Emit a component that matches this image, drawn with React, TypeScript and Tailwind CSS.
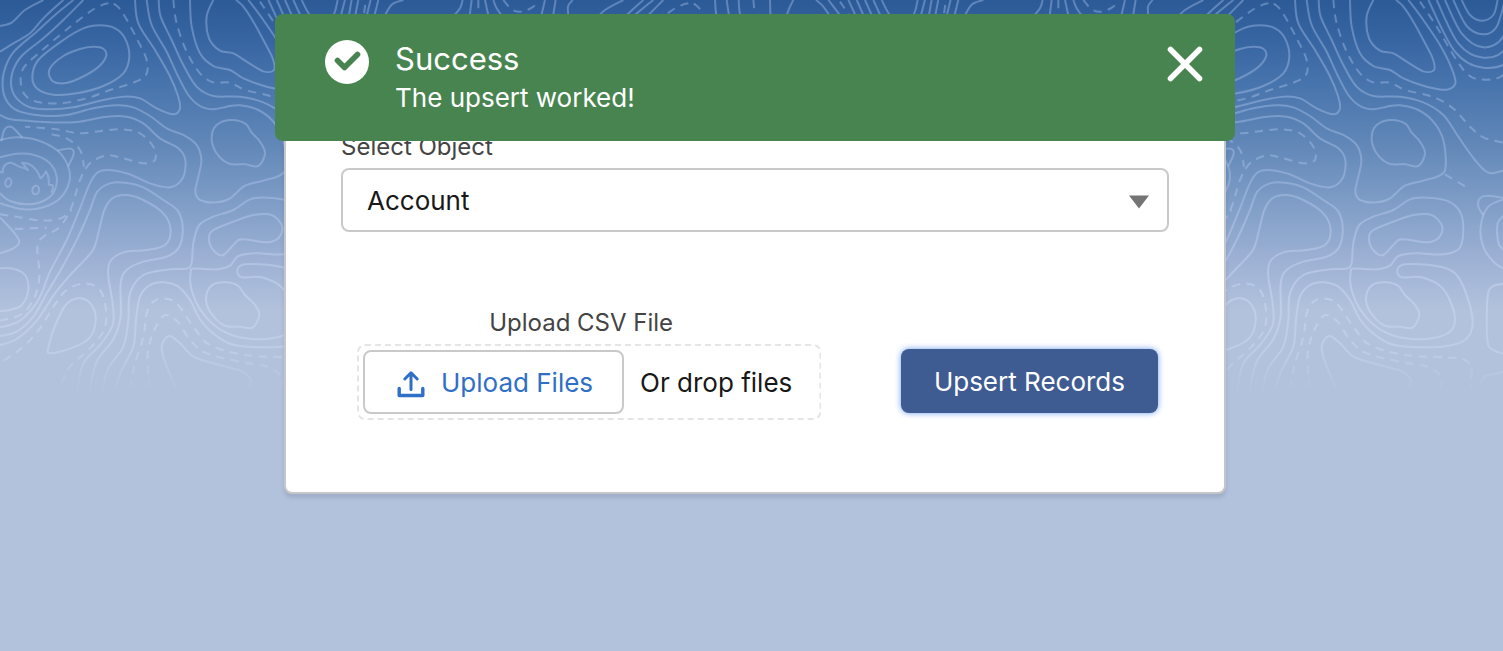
import React, { useState } from "react";

type Point = [number, number];
type Contour = { points: Point[]; closed?: boolean; dashed?: boolean };

// Rounds a list of survey points into one continuous cubic path.
function smooth(points: Point[], closed = false): string {
  const n = points.length;
  const at = (i: number): Point =>
    closed ? points[(i + n) % n] : points[Math.max(0, Math.min(n - 1, i))];
  let d = `M${points[0][0]} ${points[0][1]}`;
  const last = closed ? n : n - 1;
  for (let i = 0; i < last; i++) {
    const [a, b, c, e] = [at(i - 1), at(i), at(i + 1), at(i + 2)];
    d += `C${b[0] + (c[0] - a[0]) / 6} ${b[1] + (c[1] - a[1]) / 6} ${c[0] - (e[0] - b[0]) / 6} ${
      c[1] - (e[1] - b[1]) / 6
    } ${c[0]} ${c[1]}`;
  }
  return closed ? d + "Z" : d;
}

const contours: Contour[] = [
  { points: [[0, 78], [35, 68], [75, 30], [130, 0]] },
  { points: [[0, 155], [40, 130], [90, 100], [130, 55], [190, 0]] },
  {
    points: [
      [220, 0], [165, 45], [110, 95], [40, 157], [12, 215], [9, 270], [25, 310], [60, 335], [130, 347], [200, 345],
      [280, 325], [350, 316], [400, 322], [450, 348], [500, 385], [550, 405], [590, 435], [604, 480], [595, 530],
      [586, 575], [600, 600], [650, 607], [690, 595], [735, 557], [790, 542], [840, 526], [857, 500], [850, 420],
      [820, 365], [775, 330], [720, 316], [680, 320], [640, 328], [600, 318], [565, 285], [530, 220], [500, 155],
      [455, 75], [440, 0],
    ],
  },
  {
    points: [
      [250, 0], [190, 60], [130, 115], [65, 168], [38, 215], [34, 260], [50, 295], [90, 322], [150, 328], [220, 322],
      [300, 302], [370, 290], [420, 295], [470, 325], [520, 343], [540, 325], [533, 285], [508, 225], [465, 150],
      [415, 70], [405, 0],
    ],
  },
  {
    dashed: true,
    closed: true,
    points: [
      [325, 10], [285, 25], [230, 65], [180, 105], [110, 165], [70, 205], [62, 245], [75, 285], [110, 305], [180, 310],
      [260, 295], [330, 270], [400, 248], [438, 225], [440, 180], [410, 115], [375, 50], [350, 17],
    ],
  },
  {
    closed: true,
    points: [
      [300, 76], [250, 85], [190, 120], [115, 180], [97, 230], [112, 266], [160, 284], [230, 280], [310, 258],
      [370, 220], [388, 170], [375, 115], [345, 85],
    ],
  },
  {
    closed: true,
    points: [[280, 140], [240, 147], [190, 168], [150, 205], [153, 238], [180, 250], [220, 243], [290, 205], [318, 170], [310, 146]],
  },
  {
    points: [
      [476, 0], [482, 50], [515, 120], [550, 195], [590, 260], [640, 288], [720, 290], [790, 307], [850, 345],
      [895, 410], [945, 480], [985, 518], [1029, 512], [1060, 500],
    ],
  },
  {
    dashed: true,
    points: [
      [520, 0], [530, 70], [560, 155], [600, 220], [640, 247], [690, 248], [735, 270], [800, 285], [850, 305],
      [890, 335], [930, 380], [970, 412], [1029, 428],
    ],
  },
  {
    points: [
      [570, 0], [575, 80], [600, 160], [640, 198], [690, 210], [730, 235], [800, 260], [860, 269], [886, 250],
      [875, 205], [840, 135], [790, 60], [745, 0],
    ],
  },
  {
    points: [
      [640, 0], [620, 50], [627, 115], [660, 152], [700, 160], [740, 185], [790, 214], [822, 210], [818, 175],
      [790, 120], [760, 65], [730, 20], [708, 0],
    ],
  },
  { dashed: true, points: [[780, 5], [830, 80], [880, 165], [920, 220], [960, 238], [1029, 225], [1075, 130], [1098, 0]] },
  { points: [[905, 0], [930, 45], [965, 62], [1000, 45], [1013, 0]] },
  { points: [[880, 0], [920, 78], [970, 103], [1010, 80], [1035, 0]] },
  { points: [[855, 0], [905, 100], [970, 142], [1029, 110], [1055, 0]] },
  { points: [[830, 0], [895, 130], [970, 173], [1040, 140], [1075, 0]] },
  { points: [[805, 0], [885, 155], [970, 203], [1060, 170], [1112, 0]] },
  { points: [[1135, 0], [1120, 60]] },
  { points: [[1210, 0], [1175, 14], [1150, 55]] },
  { points: [[1388, 0], [1380, 25], [1355, 55]] },
  { points: [[1415, 0], [1408, 55]] },
  { dashed: true, points: [[1435, 0], [1435, 50]] },
  { points: [[1455, 0], [1467, 55]] },
  { points: [[1480, 0], [1490, 25], [1515, 60]] },
  { dashed: true, points: [[1510, 0], [1535, 28], [1565, 35], [1600, 20], [1614, 0]] },
  { points: [[1635, 0], [1622, 55]] },
  { points: [[1667, 0], [1658, 55]] },
  { points: [[1718, 0], [1704, 20], [1706, 55]] },
  {
    points: [
      [0, 345], [30, 358], [90, 363], [150, 367], [230, 366], [320, 350], [380, 350], [430, 370], [480, 415],
      [535, 445], [556, 480], [548, 535], [510, 562], [450, 550], [380, 520], [310, 511], [275, 540], [238, 630],
      [200, 720], [150, 815], [115, 900], [60, 962], [0, 982],
    ],
  },
  {
    points: [
      [0, 1008], [50, 995], [100, 950], [140, 880], [185, 805], [235, 710], [270, 630], [292, 575], [330, 550],
      [375, 548], [430, 562], [490, 600], [533, 632], [548, 680], [538, 740], [500, 770], [430, 785], [380, 810],
      [362, 850], [362, 950], [340, 1018], [290, 1085], [267, 1180],
    ],
  },
  {
    points: [
      [0, 1035], [50, 1017], [110, 962], [165, 880], [220, 815], [278, 752], [295, 700], [313, 630], [340, 593],
      [380, 585], [430, 600], [490, 640], [512, 690], [495, 735], [440, 750], [370, 757], [330, 785], [325, 830],
      [338, 910], [338, 975], [300, 1035], [250, 1090], [230, 1180],
    ],
  },
  {
    points: [
      [305, 1180], [325, 1105], [370, 1040], [385, 960], [390, 880], [430, 825], [510, 808], [560, 806], [575, 788],
      [580, 730], [597, 676], [640, 650], [700, 630], [750, 598], [800, 593], [860, 602], [900, 635], [910, 690],
      [898, 745], [850, 763], [770, 760], [715, 768], [690, 797], [650, 808], [585, 806], [572, 815], [575, 870],
      [605, 935], [660, 988], [735, 1015], [825, 1013], [875, 990], [883, 940], [848, 865], [785, 832], [725, 832],
      [712, 810], [735, 793], [825, 797], [885, 820], [920, 885], [938, 970], [915, 1020], [845, 1040], [720, 1038],
      [660, 1015], [605, 965], [570, 900], [535, 860], [490, 847], [450, 855], [420, 890], [408, 960], [400, 1040],
      [365, 1110], [342, 1180],
    ],
  },
  {
    closed: true,
    points: [[680, 847], [640, 853], [619, 885], [627, 930], [670, 975], [720, 980], [758, 983], [778, 945], [765, 915], [735, 885], [715, 858]],
  },
  {
    closed: true,
    points: [[627, 715], [640, 690], [700, 665], [760, 645], [815, 645], [847, 680], [835, 715], [800, 727], [725, 718], [700, 735], [668, 766], [638, 748]],
  },
  {
    closed: true,
    points: [[690, 360], [650, 375], [635, 410], [647, 455], [685, 490], [735, 493], [775, 498], [795, 460], [780, 425], [755, 398], [735, 370]],
  },
  { closed: true, points: [[150, 1060], [147, 1035], [168, 970], [200, 912], [240, 895], [275, 915], [287, 960], [270, 1012], [220, 1042]] },
  {
    dashed: true,
    points: [
      [185, 1150], [210, 1100], [270, 1045], [312, 990], [318, 930], [300, 870], [255, 850], [200, 870], [160, 920],
      [120, 985], [70, 1040], [0, 1090],
    ],
  },
  {
    dashed: true,
    points: [
      [390, 1165], [405, 1090], [430, 1010], [440, 940], [460, 905], [490, 895], [530, 910], [580, 980], [630, 1035],
      [735, 1065], [860, 1072], [915, 1080], [935, 1110], [930, 1180],
    ],
  },
  {
    dashed: true,
    points: [
      [450, 1165], [442, 1080], [455, 1010], [490, 948], [530, 962], [570, 1020], [620, 1060], [720, 1085],
      [800, 1100], [845, 1130], [840, 1160], [815, 1180],
    ],
  },
  { points: [[535, 1180], [500, 1100], [485, 1040], [507, 1008], [540, 1030], [580, 1070], [640, 1090], [720, 1112], [752, 1140], [735, 1172], [690, 1182]] },
  {
    dashed: true,
    points: [
      [0, 962], [60, 945], [100, 900], [118, 830], [112, 740], [130, 710], [180, 680], [215, 620], [240, 540],
      [270, 490], [320, 466], [370, 475], [430, 490], [465, 480], [460, 440], [420, 400], [370, 388], [310, 392],
      [240, 400], [170, 388], [75, 380],
    ],
  },
  { dashed: true, points: [[155, 403], [200, 415], [240, 450], [252, 500]] },
  { points: [[0, 805], [40, 806], [75, 825], [85, 870], [65, 915], [30, 930], [0, 933]] },
  { points: [[0, 652], [40, 695], [58, 725], [40, 745], [0, 760]] },
  { dashed: true, points: [[0, 643], [50, 650], [120, 661], [180, 656], [215, 630]] },
  { dashed: true, points: [[45, 687], [140, 683]] },
  { dashed: true, points: [[855, 523], [930, 568]] },
  // Mascot
  { points: [[0, 420], [50, 412], [110, 420], [170, 450], [203, 495], [208, 545], [180, 595], [130, 622], [70, 628], [0, 610]] },
  { points: [[0, 472], [50, 461], [100, 464], [148, 488], [170, 530], [162, 575], [130, 603], [80, 613], [30, 603], [0, 580]] },
  { points: [[4, 424], [14, 388], [35, 381], [67, 413]] },
  { points: [[172, 452], [212, 446], [221, 462], [204, 500]] },
  // Right-hand fragment
  { points: [[970, 645], [955, 620], [960, 595], [985, 587], [1040, 595]] },
  { points: [[1040, 595], [985, 620], [962, 680], [970, 740], [1000, 785], [1040, 812]] },
  { points: [[1040, 640], [1013, 670], [1016, 730], [1040, 755]] },
  { points: [[1040, 850], [1000, 858], [983, 890], [982, 1020], [1000, 1050], [1040, 1063]] },
  { points: [[960, 1160], [975, 1130], [1040, 1114]] },
];

function Topography() {
  return (
    <svg className="absolute inset-x-0 top-0 h-[400px] w-full" aria-hidden="true">
      <defs>
        <linearGradient id="ink" gradientUnits="userSpaceOnUse" x1="0" y1="0" x2="0" y2="1200">
          <stop offset="0" stopColor="#a9c4ec" stopOpacity="0.4" />
          <stop offset="0.45" stopColor="#b4c8ee" stopOpacity="0.4" />
          <stop offset="0.75" stopColor="#d0daf3" stopOpacity="0.5" />
          <stop offset="0.88" stopColor="#d0daf3" stopOpacity="0.42" />
          <stop offset="0.98" stopColor="#d0daf3" stopOpacity="0" />
        </linearGradient>
        <pattern id="topography" patternUnits="userSpaceOnUse" width="580" height="400">
          <g transform="scale(0.33333)" fill="none" stroke="url(#ink)" strokeWidth="6" strokeLinejoin="round">
            {contours.map((c, i) => (
              <path key={i} d={smooth(c.points, c.closed)} strokeDasharray={c.dashed ? "25 19" : undefined} />
            ))}
            <path d="M0 515 L8 518 C8 500 16 488 34 488 C46 493 56 503 70 503 L84 510 L66 488 C88 488 108 500 122 535 C130 530 134 522 138 514 C146 526 148 540 146 554 L158 556 C160 566 158 572 154 578" />
            <ellipse cx="25" cy="548" rx="9" ry="13" transform="rotate(12 25 548)" />
            <ellipse cx="107" cy="570" rx="10" ry="13" transform="rotate(12 107 570)" />
          </g>
        </pattern>
      </defs>
      <rect width="100%" height="100%" fill="url(#topography)" />
    </svg>
  );
}

function Toast({ onClose }: { onClose: () => void }) {
  return (
    <div
      role="status"
      className="absolute top-[14px] z-10 flex h-[127px] w-full max-w-[960px] items-start rounded-lg bg-[#488450] pt-[26px] pr-8 pl-[50px] text-white"
    >
      <svg className="size-11 shrink-0" viewBox="0 0 44 44" aria-hidden="true">
        <circle cx="22" cy="22" r="22" fill="#fff" />
        <path d="M12.5 20.5 L19.5 27.5 L32.5 14.5" fill="none" stroke="#488450" strokeWidth="5.6" strokeLinejoin="round" strokeLinecap="round" />
      </svg>
      <div className="ml-[26px] grow">
        <h2 className="text-[31px] leading-[38px]">Success</h2>
        <p className="text-[26px] leading-10">The upsert worked!</p>
      </div>
      <button type="button" aria-label="Close" onClick={onClose} className="mt-[6px] cursor-pointer">
        <svg className="size-9" viewBox="0 0 36 36" aria-hidden="true">
          <path d="M3.5 3.5 L32.5 32.5 M32.5 3.5 L3.5 32.5" stroke="#fff" strokeWidth="5.6" strokeLinecap="round" />
        </svg>
      </button>
    </div>
  );
}

export default function App() {
  const [open, setOpen] = useState(true);
  return (
    <main className="relative min-h-screen bg-[#b2c2dd] font-['Inter','Liberation_Sans',sans-serif] text-[26px] text-[#181818]">
      <div className="absolute inset-x-0 top-0 h-[320px] bg-[linear-gradient(to_bottom,#2c5a97_0px,#3765a2_40px,#4a76ae_90px,#5f86b7_140px,#7d9cc6_200px,#9db1d4_260px,#b2c2dd_310px)]" />
      <Topography />
      <div className="relative flex justify-center pt-10 pl-[7px]">
        {open && <Toast onClose={() => setOpen(false)} />}
        <form
          onSubmit={(e) => e.preventDefault()}
          className="w-full max-w-[942px] rounded-lg border-2 border-[#c4c6ca] bg-white px-[55px] pt-[87px] pb-[72px] shadow-[0_4px_4px_rgba(0,0,0,0.1)]"
        >
          <label htmlFor="object" className="block text-2xl leading-9 text-[#444]">
            Select Object
          </label>
          <div className="relative mt-[3px]">
            <select
              id="object"
              className="h-16 w-full appearance-none rounded-lg border-2 border-[#c9c9c9] bg-white px-6"
            >
              <option>Account</option>
            </select>
            <svg className="pointer-events-none absolute top-[27px] right-5 h-[14px] w-[20px]" viewBox="0 0 20 14" aria-hidden="true">
              <path d="M0 0.5 H20 L10 13.5 Z" fill="#747474" />
            </svg>
          </div>
          <div className="mt-[73px] flex items-end justify-between pr-[11px] pl-4">
            <div>
              <label htmlFor="csv" className="block pr-4 text-center text-2xl leading-9 text-[#444]">
                Upload CSV File
              </label>
              <div className="relative mt-[3px] flex items-center p-[6px] pr-[29px]">
                <svg className="absolute inset-0 size-full" aria-hidden="true">
                  <rect x="1" y="1" width="99.6%" height="74" rx="7" fill="none" stroke="#e5e5e5" strokeWidth="2" strokeDasharray="6 4" />
                </svg>
                <input id="csv" type="file" accept=".csv" className="sr-only" />
                <label
                  htmlFor="csv"
                  className="relative flex h-16 cursor-pointer items-center rounded-lg border-2 border-[#c9c9c9] bg-white pr-[29px] pl-8 text-[#2f6fc6]"
                >
                  <svg className="mt-1 mr-4 h-[28px] w-[28px]" viewBox="0 0 28 28" fill="none" stroke="currentColor" aria-hidden="true">
                    <path d="M2.2 18.5 V25.5 H25.8 V18.5" strokeWidth="3.4" strokeLinecap="round" strokeLinejoin="round" />
                    <path d="M14 19.5 V3 M7.8 9 L14 2.8 L20.2 9" strokeWidth="3" strokeLinecap="round" strokeLinejoin="round" />
                  </svg>
                  Upload Files
                </label>
                <span className="relative ml-4">Or drop files</span>
              </div>
            </div>
            <button
              type="submit"
              className="mb-[7px] h-16 cursor-pointer rounded-lg bg-[#3e5b92] px-[33px] text-white shadow-[0_0_6px_#6f9ff0]"
            >
              Upsert Records
            </button>
          </div>
        </form>
      </div>
    </main>
  );
}
